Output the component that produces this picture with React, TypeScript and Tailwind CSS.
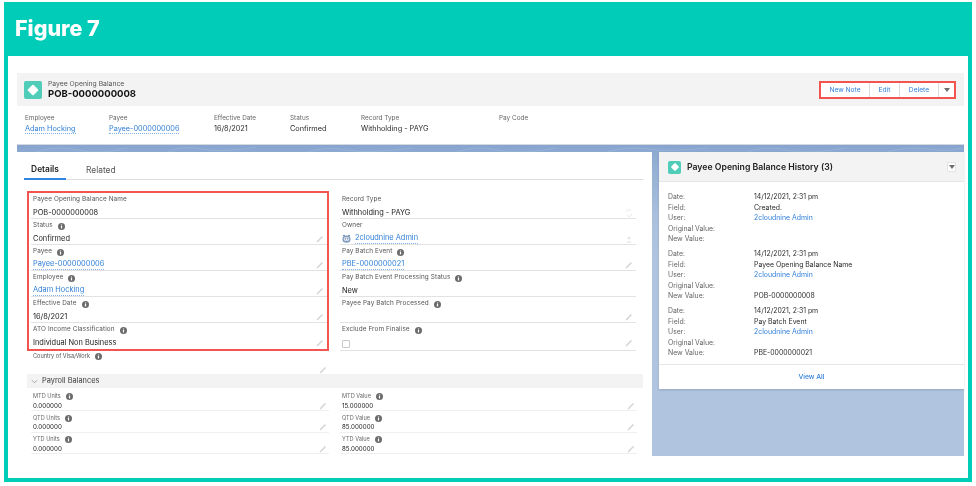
import type { ReactNode } from "react";

const sans = "font-['Inter',sans-serif]";

function Info() {
  return (
    <svg viewBox="0 0 8 8" className="w-[7px] h-[7px] ml-[5px] shrink-0">
      <circle cx="4" cy="4" r="4" fill="#6b6b6b" />
      <rect x="3.3" y="3.4" width="1.4" height="2.8" fill="#fff" />
      <rect x="3.3" y="1.7" width="1.4" height="1.1" fill="#fff" />
    </svg>
  );
}

function Pencil() {
  return (
    <svg viewBox="0 0 8 8" className="w-[8px] h-[8px] shrink-0">
      <path d="M0.6 7.4 L1 5.9 L5.9 1 L7 2.1 L2.1 7 Z" fill="#d4d4d4" />
    </svg>
  );
}

function RecordIcon({ big }: { big?: boolean }) {
  return (
    <div className={big ? "w-[18px] h-[18px] rounded-[2px] bg-[#4fcdb8] flex items-center justify-center shrink-0" : "w-[13px] h-[13px] rounded-[2px] bg-[#4fcdb8] flex items-center justify-center shrink-0"}>
      <div className={big ? "w-[8px] h-[8px] bg-white rotate-45 rounded-[1px]" : "w-[6px] h-[6px] bg-white rotate-45 rounded-[1px]"} />
    </div>
  );
}

function Caret() {
  return <div className="w-0 h-0 border-x-[3.5px] border-x-transparent border-t-[4px] border-t-[#706e6b]" />;
}

function Link({ children }: { children: ReactNode }) {
  return <span className="text-[#2f7fd8] border-b border-dotted border-[#2f7fd8]/60 leading-[10px]">{children}</span>;
}

function Field({
  label,
  info = true,
  value,
  edit = true,
  trail,
  last,
  h = "h-[26px]",
}: {
  label: string;
  info?: boolean;
  value?: ReactNode;
  edit?: boolean;
  trail?: ReactNode;
  last?: boolean;
  h?: string;
}) {
  return (
    <div className={`${h} px-[2px] pt-[3px] ${last ? "" : "border-b border-[#e2e2e2]"}`}>
      <div className="flex items-center h-[9px] text-[6.4px] text-[#555] tracking-[0.1px]">
        {label}
        {info && <Info />}
      </div>
      <div className="flex items-center justify-between h-[12px] mt-[2px] text-[7.4px] text-[#222]">
        <div className="flex items-center">{value}</div>
        <div className="mr-[1px]">{edit && <Pencil />}{trail}</div>
      </div>
    </div>
  );
}

function Balance({ label, value }: { label: string; value: string }) {
  return (
    <div className="h-[21.5px] px-[2px] pt-[3px] border-b border-[#efefef]">
      <div className="flex items-center h-[8px] text-[5.6px] text-[#666]">
        {label}
        <Info />
      </div>
      <div className="flex items-center justify-between h-[10px] text-[6.2px] text-[#222]">
        {value}
        <Pencil />
      </div>
    </div>
  );
}

function Highlight({ label, value, w }: { label: string; value: ReactNode; w: string }) {
  return (
    <div className={w}>
      <div className="text-[6.4px] leading-[10px] text-[#666]">{label}</div>
      <div className="text-[7.3px] leading-[11px] text-[#2b2b2b]">{value}</div>
    </div>
  );
}

function HistoryGroup({ field, next }: { field: string; next?: string }) {
  const rows: [string, ReactNode][] = [
    ["Date:", "14/12/2021, 2:31 pm"],
    ["Field:", field],
    ["User:", <span className="text-[#2f7fd8]">2cloudnine Admin</span>],
    ["Original Value:", ""],
    ["New Value:", next ?? ""],
  ];
  return (
    <div className="mb-[4px]">
      {rows.map(([k, v]) => (
        <div key={k} className="flex h-[10.6px] items-center text-[6.9px]">
          <div className="w-[86px] text-[#666]">{k}</div>
          <div className="text-[#2b2b2b]">{v}</div>
        </div>
      ))}
    </div>
  );
}

export default function App() {
  return (
    <div className={`w-[976px] h-[486px] bg-white pt-[2px] pl-[4px] overflow-hidden ${sans}`}>
      <div className="w-[968px] h-[480px] bg-[#00ccb8] blur-[0.4px]">
        <div className="h-[54px] pl-[11px] pt-[12px] text-[21.5px] leading-[28px] font-extrabold text-white">Figure 7</div>
        <div className="ml-[4px] w-[960px] h-[422px] bg-white pt-[17px] pl-[9px]">
          {/* record header */}
          <div className="w-[947px] h-[33px] bg-[#f3f3f3] flex items-center justify-between pl-[7px] pr-[8px]">
            <div className="flex items-center gap-[6px]">
              <RecordIcon big />
              <div>
                <div className="text-[6.8px] leading-[9px] text-[#555]">Payee Opening Balance</div>
                <div className="text-[9.5px] leading-[12px] font-bold text-[#111]">POB-0000000008</div>
              </div>
            </div>
            <div className="w-[137px] h-[18px] border-2 border-[#f2544f] bg-white flex items-center text-[6.7px] text-[#2f7fd8]">
              <div className="w-[49px] h-full pt-[1px] flex items-center justify-center border-r border-[#dcdcdc]">New Note</div>
              <div className="w-[30px] h-full pt-[1px] flex items-center justify-center border-r border-[#dcdcdc]">Edit</div>
              <div className="w-[39px] h-full pt-[1px] flex items-center justify-center border-r border-[#dcdcdc]">Delete</div>
              <div className="flex-1 flex items-center justify-center"><Caret /></div>
            </div>
          </div>

          {/* highlights */}
          <div className="w-[947px] h-[38px] flex pl-[8px] pt-[7px]">
            <Highlight w="w-[84px]" label="Employee" value={<Link>Adam Hocking</Link>} />
            <Highlight w="w-[105px]" label="Payee" value={<Link>Payee-0000000006</Link>} />
            <Highlight w="w-[76px]" label="Effective Date" value="16/8/2021" />
            <Highlight w="w-[71px]" label="Status" value="Confirmed" />
            <Highlight w="w-[138px]" label="Record Type" value="Withholding - PAYG" />
            <Highlight w="w-[60px]" label="Pay Code" value="" />
          </div>

          {/* page body on the blue backdrop */}
          <div className="relative w-[947px] h-[312px] border-t border-[#d5d9df] bg-[linear-gradient(#86a4ce_0px,#8fabd2_9px,#a9bfdc_70px,#b0c4df_110px)]">
            <svg className="w-[947px] h-[7px] block" viewBox="0 0 947 7" fill="none" stroke="#ffffff" strokeOpacity="0.16" strokeWidth="0.7">
              <path d="M20 7 Q40 0 60 5 T110 3 M150 7 Q165 0 185 4 T240 2 M290 7 Q310 1 330 5 T395 3 M440 7 Q460 0 480 5 T540 3 M590 7 Q610 1 630 4 T690 3 M730 7 Q750 0 770 5 T830 3 M870 7 Q890 1 910 4 T945 3" />
            </svg>
            <div className="flex h-[304px]">
              {/* details panel */}
              <div className="w-[635px] bg-white">
                <div className="ml-[7px] w-[619px] h-[28px] border-b border-[#dddddd] flex text-[8.4px]">
                  <div className="w-[42px] h-[28px] border-b-2 border-[#2f85e0] flex items-center justify-center font-semibold text-[#222] pt-[9px]">Details</div>
                  <div className="ml-[20px] flex items-center text-[#555] pt-[9px]">Related</div>
                </div>
                <div className="flex mt-[10.5px]">
                  <div className="ml-[10px] w-[302px] border-2 border-[#f2544f] pl-[2px]">
                    <Field label="Payee Opening Balance Name" info={false} value="POB-0000000008" edit={false} />
                    <Field label="Status" value="Confirmed" />
                    <Field label="Payee" value={<Link>Payee-0000000006</Link>} />
                    <Field label="Employee" value={<Link>Adam Hocking</Link>} />
                    <Field label="Effective Date" value="16/8/2021" />
                    <Field label="ATO Income Classification" value="Individual Non Business" last />
                  </div>
                  <div className="ml-[11px] w-[296px] pt-[2px]">
                    <Field
                      label="Record Type"
                      info={false}
                      value="Withholding -  PAYG"
                      edit={false}
                      trail={<svg viewBox="0 0 8 8" className="w-[8px] h-[8px]"><path d="M1 3 A3 3 0 0 1 6 1.5 M7 5 A3 3 0 0 1 2 6.5" stroke="#e2e2e2" strokeWidth="0.8" fill="none" /></svg>}
                    />
                    <Field
                      label="Owner"
                      info={false}
                      edit={false}
                      value={
                        <>
                          <svg viewBox="0 0 10 10" className="w-[9px] h-[9px] mr-[4px]">
                            <circle cx="2.2" cy="1.8" r="1" fill="#5f7fa6" />
                            <circle cx="7.8" cy="1.8" r="1" fill="#5f7fa6" />
                            <ellipse cx="5" cy="5.8" rx="4.5" ry="4" fill="#7f9cc0" />
                            <rect x="2" y="3.6" width="6" height="4" rx="1.6" fill="#e8eef5" />
                            <circle cx="3.7" cy="5.4" r="0.7" fill="#4a6382" />
                            <circle cx="6.3" cy="5.4" r="0.7" fill="#4a6382" />
                          </svg>
                          <Link>2cloudnine Admin</Link>
                        </>
                      }
                      trail={<svg viewBox="0 0 8 8" className="w-[8px] h-[8px]"><circle cx="4" cy="3" r="1.6" fill="#e6e6e6" /><path d="M1 7.5 Q4 4.5 7 7.5 Z" fill="#e6e6e6" /></svg>}
                    />
                    <Field label="Pay Batch Event" value={<Link>PBE-0000000021</Link>} />
                    <Field label="Pay Batch Event Processing Status" value="New" edit={false} />
                    <Field label="Payee Pay Batch Processed" />
                    <Field
                      h="h-[28px]"
                      label="Exclude From Finalise"
                      value={<div className="w-[8px] h-[8px] mt-[3px] border border-[#c9c9c9] rounded-[1px] bg-white" />}
                    />
                  </div>
                </div>

                {/* country + payroll balances */}
                <div className="ml-[14px] w-[298px] h-[23px] px-[2px] pt-[2px]">
                  <div className="flex items-center h-[8px] text-[5.6px] text-[#555]">
                    Country of Visa/Work
                    <Info />
                  </div>
                  <div className="flex justify-end mt-[5px]"><Pencil /></div>
                </div>
                <div className="ml-[10px] w-[616px] h-[14px] bg-[#f3f3f3] flex items-center pl-[4px] pt-[1px] text-[7.4px] text-[#3a3a3a]">
                  <svg viewBox="0 0 8 8" className="w-[7px] h-[7px] mr-[4px]" fill="none" stroke="#777" strokeWidth="0.7"><path d="M1 2.5 L4 5.5 L7 2.5" /></svg>
                  Payroll Balances
                </div>
                <div className="flex mt-[2px]">
                  <div className="ml-[14px] w-[298px]">
                    <Balance label="MTD Units" value="0.000000" />
                    <Balance label="QTD Units" value="0.000000" />
                    <Balance label="YTD Units" value="0.000000" />
                  </div>
                  <div className="ml-[11px] w-[297px]">
                    <Balance label="MTD Value" value="15.000000" />
                    <Balance label="QTD Value" value="85.000000" />
                    <Balance label="YTD Value" value="85.000000" />
                  </div>
                </div>
              </div>

              {/* history card */}
              <div className="ml-[7px] w-[305px] h-[237px] bg-white shadow-[0_1px_2px_rgba(0,0,0,0.15)]">
                <div className="h-[30px] bg-[#f3f3f3] border-b border-[#e6e6e6] flex items-center pl-[9px] pr-[8px] pt-[1px]">
                  <RecordIcon />
                  <div className="ml-[6px] flex-1 pt-[2px] text-[8.7px] font-semibold text-[#222]">Payee Opening Balance History (3)</div>
                  <div className="w-[9px] h-[10px] bg-white border border-[#e3e3e3] rounded-[1px] flex items-center justify-center"><Caret /></div>
                </div>
                <div className="h-[183px] border-b border-[#e6e6e6] pl-[9px] pt-[10px]">
                  <HistoryGroup field="Created." />
                  <HistoryGroup field="Payee Opening Balance Name" next="POB-0000000008" />
                  <HistoryGroup field="Pay Batch Event" next="PBE-0000000021" />
                </div>
                <div className="h-[24px] pt-[1px] flex items-center justify-center text-[6.8px] font-medium text-[#2f7fd8]">View All</div>
              </div>
            </div>
          </div>
        </div>
      </div>
    </div>
  );
}
